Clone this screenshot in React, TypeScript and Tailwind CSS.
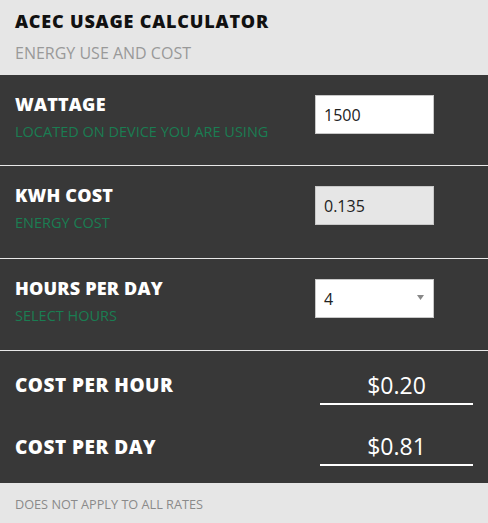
import React from "react";

const font = { fontFamily: '"Open Sans", "Noto Sans", sans-serif' };

function InputRow({ title, sub, children, h }: { title: string; sub: string; children: React.ReactNode; h: string }) {
  return (
    <div className={`flex items-start justify-between border-b border-[#e8e8e8] px-[15px] ${h}`}>
      <div className="pt-[17px]">
        <div className="text-[18px] font-extrabold uppercase leading-[24px] tracking-[0.2px] text-white">{title}</div>
        <div className="mt-[6px] text-[14.5px] leading-[20px] text-[#1a7d52]">{sub}</div>
      </div>
      <div className="mr-[39px] pt-[20px]">{children}</div>
    </div>
  );
}

export default function App() {
  return (
    <div className="w-[488px] h-[523px] flex flex-col bg-[#383838]" style={font}>
      <div className="h-[75px] shrink-0 bg-[#e6e6e6] px-[15px] pt-[9px]">
        <div className="text-[18px] font-extrabold leading-[24px] tracking-[0.8px] text-[#111]">ACEC USAGE CALCULATOR</div>
        <div className="mt-[8.5px] text-[16px] leading-[22px] text-[#999]">ENERGY USE AND COST</div>
      </div>
      <InputRow h="h-[91px]" title="WATTAGE" sub="LOCATED ON DEVICE YOU ARE USING">
        <div className="flex h-[39px] w-[119px] items-center border border-[#c8c8c8] bg-white px-[8px] text-[16px] text-[#222]">1500</div>
      </InputRow>
      <InputRow h="h-[93px]" title="KWH COST" sub="ENERGY COST">
        <div className="flex h-[39px] w-[119px] items-center border border-[#c8c8c8] bg-[#e6e6e6] px-[8px] text-[16px] text-[#222]">0.135</div>
      </InputRow>
      <InputRow h="h-[92px]" title="HOURS PER DAY" sub="SELECT HOURS">
        <div className="flex h-[39px] w-[119px] items-center justify-between border border-[#c8c8c8] bg-white pl-[8px] pr-[9px] text-[16px] text-[#222]">
          <span>4</span>
          <svg width="7" height="5" viewBox="0 0 7 5" className="-mt-[2px]"><path d="M0 0 H7 L3.5 5 Z" fill="#888" /></svg>
        </div>
      </InputRow>
      <div className="flex-1 px-[15px] pt-[18px]">
        <div className="flex items-start justify-between">
          <div className="pt-[4px] text-[19px] font-extrabold leading-[24px] tracking-[0.5px] text-white">COST PER HOUR</div>
          <div className="w-[153px] border-b-2 border-white pb-[2px] text-center text-[23px] leading-[32px] text-white">$0.20</div>
        </div>
        <div className="mt-[25px] flex items-start justify-between">
          <div className="pt-[5px] text-[19px] font-extrabold leading-[24px] tracking-[0.5px] text-white">COST PER DAY</div>
          <div className="w-[153px] border-b-2 border-white pb-[2px] text-center text-[23px] leading-[32px] text-white">$0.81</div>
        </div>
      </div>
      <div className="h-[40px] shrink-0 bg-[#e6e6e6] px-[15px] pt-[12px] text-[12.7px] leading-[18px] text-[#8a8a8a]">DOES NOT APPLY TO ALL RATES</div>
    </div>
  );
}
